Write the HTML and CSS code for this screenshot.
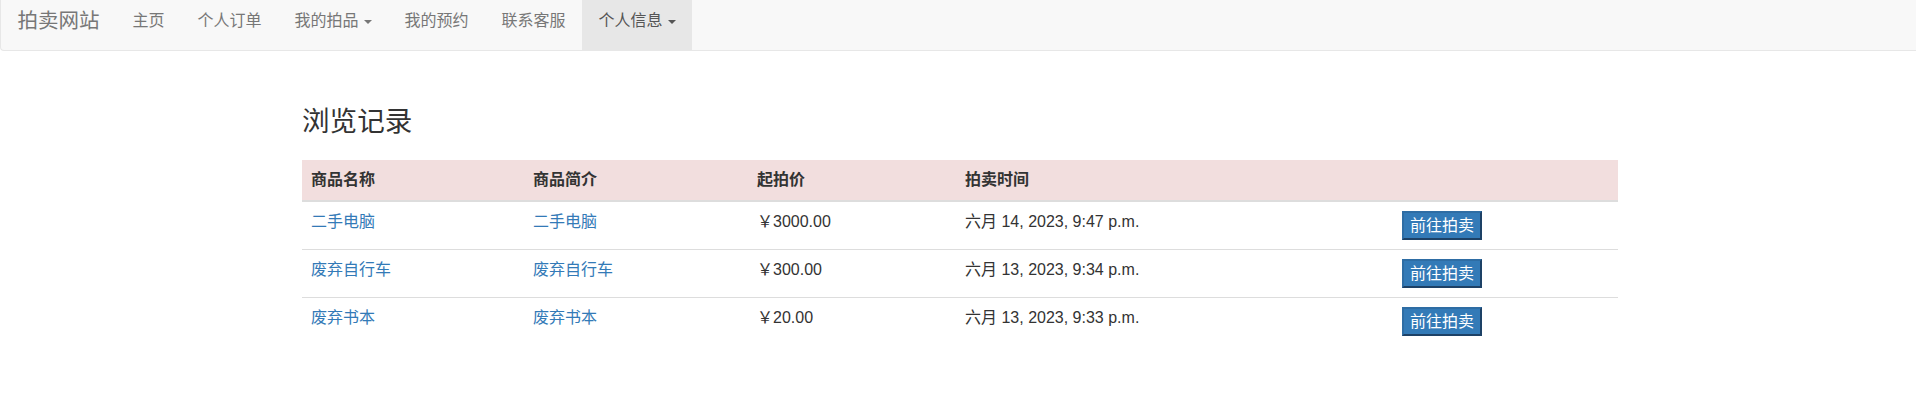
FILE: index.html
```html
<!DOCTYPE html>
<html lang="zh-CN">
<head>
<meta charset="utf-8">
<title>浏览记录</title>
<link rel="stylesheet" href="styles.css">
</head>
<body>
<nav class="navbar">
  <a class="brand" href="#">拍卖网站</a>
  <ul class="nav">
    <li><a href="#">主页</a></li>
    <li><a href="#">个人订单</a></li>
    <li><a href="#">我的拍品<span class="caret"></span></a></li>
    <li><a href="#">我的预约</a></li>
    <li><a href="#">联系客服</a></li>
    <li class="active"><a href="#">个人信息<span class="caret"></span></a></li>
  </ul>
</nav>
<main class="container">
  <h3 class="title">浏览记录</h3>
  <table class="table">
    <colgroup>
      <col class="c1"><col class="c2"><col class="c3"><col class="c4"><col class="c5">
    </colgroup>
    <thead>
      <tr class="danger">
        <th>商品名称</th>
        <th>商品简介</th>
        <th>起拍价</th>
        <th>拍卖时间</th>
        <th></th>
      </tr>
    </thead>
    <tbody>
      <tr>
        <td><a href="#">二手电脑</a></td>
        <td><a href="#">二手电脑</a></td>
        <td>￥3000.00</td>
        <td>六月 14, 2023, 9:47 p.m.</td>
        <td><button class="btn" type="button">前往拍卖</button></td>
      </tr>
      <tr>
        <td><a href="#">废弃自行车</a></td>
        <td><a href="#">废弃自行车</a></td>
        <td>￥300.00</td>
        <td>六月 13, 2023, 9:34 p.m.</td>
        <td><button class="btn" type="button">前往拍卖</button></td>
      </tr>
      <tr>
        <td><a href="#">废弃书本</a></td>
        <td><a href="#">废弃书本</a></td>
        <td>￥20.00</td>
        <td>六月 13, 2023, 9:33 p.m.</td>
        <td><button class="btn" type="button">前往拍卖</button></td>
      </tr>
    </tbody>
  </table>
</main>
</body>
</html>
```

FILE: styles.css
```css
* { box-sizing: border-box; }

body {
  margin: 0;
  background: #fff;
  color: #333;
  font-family: "Liberation Sans", "Noto Sans CJK SC", sans-serif;
  font-size: 16px;
  line-height: 22px;
}

a { text-decoration: none; }

.navbar {
  display: flex;
  height: 51px;
  background: #f8f8f8;
  border-left: 1px solid #e7e7e7;
  border-bottom: 1px solid #e7e7e7;
  border-bottom-left-radius: 4px;
}

.brand {
  display: block;
  padding: 9px 16.5px 0 16.5px;
  font-size: 20.5px;
  line-height: 23px;
  color: #777;
}

.nav {
  display: flex;
  margin: 0;
  padding: 0;
  list-style: none;
}

.nav li a {
  display: block;
  height: 50px;
  padding: 9px 16.5px 0 16.5px;
  line-height: 23px;
  color: #777;
}

.nav li.active a {
  background: #e7e7e7;
  color: #555;
}

.caret {
  display: inline-block;
  width: 0;
  height: 0;
  margin-left: 5px;
  vertical-align: middle;
  border-top: 4px solid;
  border-left: 4px solid transparent;
  border-right: 4px solid transparent;
}

.container {
  width: 1316px;
  margin-left: 302px;
}

.title {
  margin: 56px 0 23px 0;
  font-size: 27.6px;
  line-height: 30px;
  font-weight: normal;
  color: #333;
}

.table {
  width: 1316px;
  border-collapse: separate;
  border-spacing: 0;
  table-layout: fixed;
}

.c1 { width: 222px; }
.c2 { width: 224px; }
.c3 { width: 208px; }
.c4 { width: 437px; }
.c5 { width: 225px; }

.table th {
  padding: 9px;
  text-align: left;
  font-weight: bold;
  line-height: 22px;
  color: #333;
  border-bottom: 2px solid #ddd;
}

.table .danger th { background: #f2dede; }

.table td {
  padding: 9px;
  vertical-align: top;
  line-height: 22px;
}

.table tbody tr + tr td { border-top: 1px solid #ddd; }

.table td a { color: #337ab7; }

.btn {
  display: inline-block;
  vertical-align: top;
  height: 29px;
  margin: 0;
  padding: 0 6px;
  font-family: "Liberation Sans", "Noto Sans CJK SC", sans-serif;
  font-size: 16px;
  line-height: 25px;
  color: #fff;
  background: #337ab7;
  border-width: 2px;
  border-style: solid;
  border-color: #2e6da4 #1d4166 #1d4166 #2e6da4;
  border-radius: 0;
}
```
